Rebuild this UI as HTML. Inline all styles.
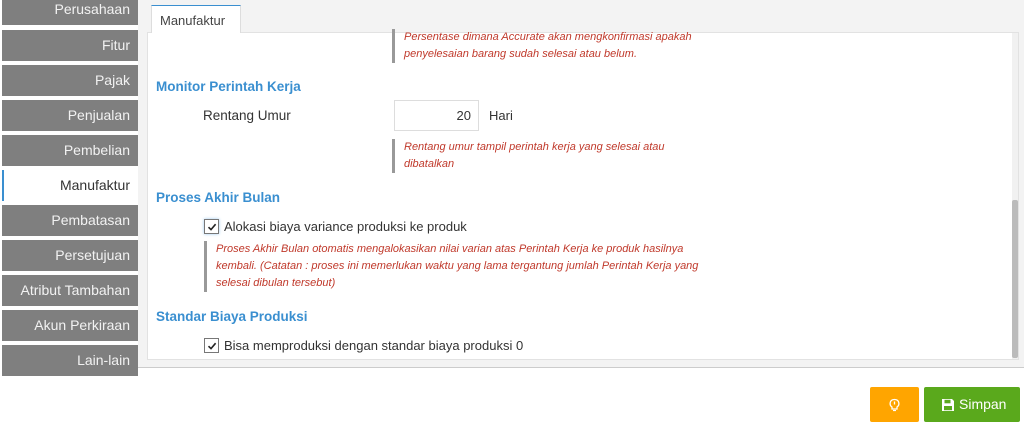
<!DOCTYPE html>
<html><head><meta charset="utf-8"><style>
*{margin:0;padding:0;box-sizing:border-box}
body{width:1024px;height:435px;background:#fff;font-family:"Liberation Sans",sans-serif;position:relative;overflow:hidden}
.a{position:absolute;white-space:nowrap}
.sb{position:absolute;left:2px;width:136px;height:31px;background:#7f7f7f;color:#f2f2f2;font-size:14px;text-align:right;padding-right:8px;line-height:31px}
.sb.act{background:#fff;color:#333;border-left:2px solid #3a8fd0}
.h{font-weight:bold;color:#3a8fd0;font-size:13.5px}
.l{font-size:13px;color:#333}
.n{position:absolute;border-left:3px solid #999;color:#c0392b;font-style:italic;font-size:11px;line-height:17px;padding-left:9px;white-space:nowrap}
.cb{position:absolute;width:15px;height:15px;border:1px solid #777;background:#fff}
.cb svg{position:absolute;left:2px;top:2px}
</style></head><body>
<div class="a" style="left:138px;top:0;width:886px;height:368px;background:#f3f3f3;border-bottom:1px solid #ccc"></div>
<div class="a" style="left:147px;top:32px;width:872px;height:328px;background:#fff;border:1px solid #e2e2e2"></div>
<div class="a" style="left:151px;top:5px;width:90px;height:28px;background:#fff;border:1px solid #ddd;border-top:1px solid #3a8fd0;border-bottom:none;font-size:13px;color:#444;padding:7px 0 0 8px">Manufaktur</div>
<div class="a" style="left:1012px;top:33px;width:6px;height:326px;background:#f1f1f1"></div>
<div class="a" style="left:1012px;top:200px;width:6px;height:158px;background:#bbb;border-radius:2px"></div>

<div class="sb" style="top:-6px">Perusahaan</div>
<div class="sb" style="top:30px">Fitur</div>
<div class="sb" style="top:65px">Pajak</div>
<div class="sb" style="top:100px">Penjualan</div>
<div class="sb" style="top:135px">Pembelian</div>
<div class="sb act" style="top:170px">Manufaktur</div>
<div class="sb" style="top:205px">Pembatasan</div>
<div class="sb" style="top:240px">Persetujuan</div>
<div class="sb" style="top:275px">Atribut Tambahan</div>
<div class="sb" style="top:310px">Akun Perkiraan</div>
<div class="sb" style="top:345px">Lain-lain</div>

<div class="n" style="left:392px;top:29px">Persentase dimana Accurate akan mengkonfirmasi apakah<br>penyelesaian barang sudah selesai atau belum.</div>
<div class="a h" style="left:156px;top:79px">Monitor Perintah Kerja</div>
<div class="a l" style="left:203px;top:108px;font-size:13.5px">Rentang Umur</div>
<div class="a" style="left:394px;top:100px;width:85px;height:31px;border:1px solid #ddd;font-size:13px;color:#333;text-align:right;padding:7px 7px 0 0">20</div>
<div class="a l" style="left:489px;top:108px">Hari</div>
<div class="n" style="left:392px;top:139px">Rentang umur tampil perintah kerja yang selesai atau<br>dibatalkan</div>
<div class="a h" style="left:156px;top:190px">Proses Akhir Bulan</div>
<div class="cb" style="left:204px;top:219px;box-shadow:0 0 3px #9cc8ee"><svg width="10" height="10" viewBox="0 0 10 10"><path d="M1.5 5.2 L4 7.6 L8.6 2.2" stroke="#222" stroke-width="1.6" fill="none"/></svg></div>
<div class="a l" style="left:224px;top:219px">Alokasi biaya variance produksi ke produk</div>
<div class="n" style="left:204px;top:241px;line-height:17px">Proses Akhir Bulan otomatis mengalokasikan nilai varian atas Perintah Kerja ke produk hasilnya<br>kembali. (Catatan : proses ini memerlukan waktu yang lama tergantung jumlah Perintah Kerja yang<br>selesai dibulan tersebut)</div>
<div class="a h" style="left:156px;top:309px">Standar Biaya Produksi</div>
<div class="cb" style="left:204px;top:338px"><svg width="10" height="10" viewBox="0 0 10 10"><path d="M1.5 5.2 L4 7.6 L8.6 2.2" stroke="#222" stroke-width="1.6" fill="none"/></svg></div>
<div class="a l" style="left:224px;top:338px">Bisa memproduksi dengan standar biaya produksi 0</div>

<div class="a" style="left:870px;top:387px;width:49px;height:35px;background:#ffa500;border-radius:2px"><svg style="position:absolute;left:18px;top:10px" width="13" height="15" viewBox="0 0 13 15"><path d="M4 10 C1 8 1.5 2.5 6.5 2.5 C11.5 2.5 12 8 9 10 L9 12 L4 12 Z" fill="none" stroke="#fff" stroke-width="1.3"/><path d="M6.5 4.5 V7.5" stroke="#fff" stroke-width="1.3"/><path d="M5 13.5 H8" stroke="#fff" stroke-width="1.2"/></svg></div>
<div class="a" style="left:924px;top:387px;width:96px;height:35px;background:#5aa91c;border-radius:2px;color:#fff;font-size:14px"><svg style="position:absolute;left:17px;top:11px" width="14" height="14" viewBox="0 0 14 14"><path d="M1 1 H11 L13 3 V13 H1 Z" fill="#fff"/><rect x="3.5" y="1.8" width="6" height="3.5" fill="#5aa91c"/><rect x="3" y="8" width="8" height="4.2" fill="#5aa91c"/></svg><span style="position:absolute;left:35px;top:9px">Simpan</span></div>
</body></html>
